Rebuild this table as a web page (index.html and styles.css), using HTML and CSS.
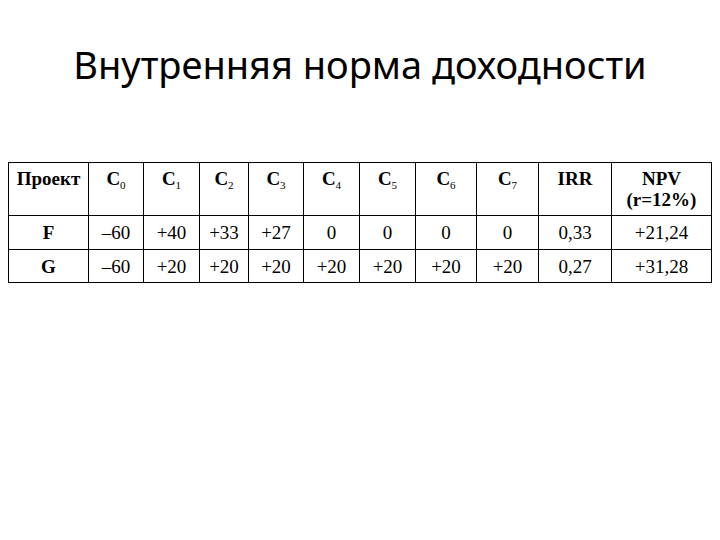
FILE: index.html
```html
<!DOCTYPE html>
<html lang="ru">
<head>
<meta charset="utf-8">
<title>Внутренняя норма доходности</title>
<link rel="stylesheet" href="styles.css">
</head>
<body>
<h1 class="title">Внутренняя норма доходности</h1>
<table class="grid">
  <colgroup>
    <col class="c-proj"><col class="c-0"><col class="c-1"><col class="c-2"><col class="c-3"><col class="c-4"><col class="c-5"><col class="c-6"><col class="c-7"><col class="c-irr"><col class="c-npv">
  </colgroup>
  <thead>
    <tr>
      <th>Проект</th>
      <th>C<sub>0</sub></th>
      <th>C<sub>1</sub></th>
      <th>C<sub>2</sub></th>
      <th>C<sub>3</sub></th>
      <th>C<sub>4</sub></th>
      <th>C<sub>5</sub></th>
      <th>C<sub>6</sub></th>
      <th>C<sub>7</sub></th>
      <th>IRR</th>
      <th>NPV<br>(r=12%)</th>
    </tr>
  </thead>
  <tbody>
    <tr>
      <th>F</th><td>–60</td><td>+40</td><td>+33</td><td>+27</td><td>0</td><td>0</td><td>0</td><td>0</td><td>0,33</td><td>+21,24</td>
    </tr>
    <tr>
      <th>G</th><td>–60</td><td>+20</td><td>+20</td><td>+20</td><td>+20</td><td>+20</td><td>+20</td><td>+20</td><td>0,27</td><td>+31,28</td>
    </tr>
  </tbody>
</table>
</body>
</html>
```
FILE: styles.css
```css
html, body {
  margin: 0;
  padding: 0;
  background: #ffffff;
}
body {
  width: 720px;
  height: 540px;
  overflow: hidden;
}
.title {
  margin: 0;
  padding-top: 42px;
  height: 162px;
  box-sizing: border-box;
  text-align: center;
  font-family: "Noto Sans", "Open Sans", sans-serif;
  font-weight: normal;
  font-size: 38px;
  line-height: 44px;
  color: #000;
}
.grid {
  margin-left: 8px;
  width: 704px;
  border-collapse: collapse;
  table-layout: fixed;
  font-family: "Liberation Serif", "Times New Roman", serif;
  font-size: 19px;
  color: #000;
}
.grid th, .grid td {
  border: 1.5px solid #000;
  text-align: center;
  padding: 0;
}
.grid thead th {
  vertical-align: top;
  height: 53px;
  padding-top: 5px;
  line-height: 21px;
  font-weight: bold;
  box-sizing: border-box;
}
.grid tbody tr:first-child th,
.grid tbody tr:first-child td { height: 33px; }
.grid tbody th,
.grid tbody td {
  height: 32px;
  vertical-align: middle;
  line-height: 21px;
}
.grid tbody th { font-weight: bold; }
.grid tbody td { font-weight: normal; }
.grid sub {
  font-size: 11px;
  vertical-align: -4px;
  line-height: 0;
  font-weight: normal;
}
.c-proj { width: 80px; }
.c-0 { width: 55px; }
.c-1 { width: 56px; }
.c-2 { width: 49px; }
.c-3 { width: 55px; }
.c-4 { width: 56px; }
.c-5 { width: 56px; }
.c-6 { width: 61px; }
.c-7 { width: 62px; }
.c-irr { width: 73px; }
.c-npv { width: 100px; }
```
